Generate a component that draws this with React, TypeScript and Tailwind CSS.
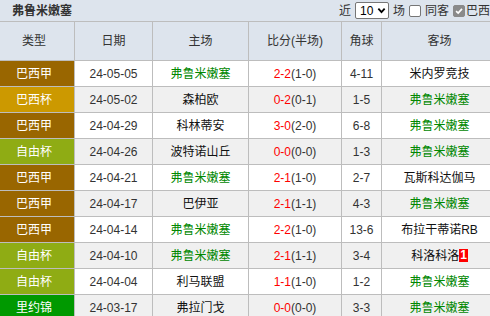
const rows = [
  { type: "巴西甲", date: "24-05-05", home: "弗鲁米嫩塞", score: "2-2", half: "(1-0)", corner: "4-11", away: "米内罗竞技" },
  { type: "巴西杯", date: "24-05-02", home: "森柏欧", score: "0-2", half: "(0-1)", corner: "1-5", away: "弗鲁米嫩塞" },
  { type: "巴西甲", date: "24-04-29", home: "科林蒂安", score: "3-0", half: "(2-0)", corner: "6-8", away: "弗鲁米嫩塞" },
  { type: "自由杯", date: "24-04-26", home: "波特诺山丘", score: "0-0", half: "(0-0)", corner: "1-3", away: "弗鲁米嫩塞" },
  { type: "巴西甲", date: "24-04-21", home: "弗鲁米嫩塞", score: "2-1", half: "(1-0)", corner: "2-7", away: "瓦斯科达伽马" },
  { type: "巴西甲", date: "24-04-17", home: "巴伊亚", score: "2-1", half: "(1-1)", corner: "4-3", away: "弗鲁米嫩塞" },
  { type: "巴西甲", date: "24-04-14", home: "弗鲁米嫩塞", score: "2-2", half: "(1-0)", corner: "13-6", away: "布拉干蒂诺RB" },
  { type: "自由杯", date: "24-04-10", home: "弗鲁米嫩塞", score: "2-1", half: "(1-1)", corner: "3-4", away: "科洛科洛", badge: "1" },
  { type: "自由杯", date: "24-04-04", home: "利马联盟", score: "1-1", half: "(1-0)", corner: "1-2", away: "弗鲁米嫩塞" },
  { type: "里约锦", date: "24-03-17", home: "弗拉门戈", score: "0-0", half: "(0-0)", corner: "3-3", away: "弗鲁米嫩塞" },
];

const typeBg: Record<string, string> = {
  巴西甲: "bg-[#996600]",
  巴西杯: "bg-[#cc9900]",
  自由杯: "bg-[#8fac14]",
  里约锦: "bg-[#009900]",
};

const TEAM = "弗鲁米嫩塞";
const cols = "grid grid-cols-[75px_78px_96px_93px_40px_116px]";
const cell = "flex items-center justify-center border-r border-b border-[#bdbdbd]";

function Team({ name, badge }: { name: string; badge?: string }) {
  return (
    <span className={name === TEAM ? "text-[#008800]" : "text-[#111]"}>
      {name}
      {badge && (
        <span className="inline-block bg-[#ff0000] text-white font-bold px-[1px] leading-[13px] align-[1px]">
          {badge}
        </span>
      )}
    </span>
  );
}

function Box({ checked }: { checked?: boolean }) {
  return (
    <span
      className={
        "inline-flex items-center justify-center w-[12px] h-[12px] rounded-[2px] border " +
        (checked ? "bg-[#8a8a8a] border-[#8a8a8a]" : "bg-white border-[#767676]")
      }
    >
      {checked && (
        <svg viewBox="0 0 12 12" className="w-[10px] h-[10px]">
          <path d="M2.5 6.2 L5 8.6 L9.6 3.4" stroke="white" strokeWidth="2" fill="none" />
        </svg>
      )}
    </span>
  );
}

export default function App() {
  return (
    <div className="w-[490px] h-[316px] overflow-hidden bg-white">
      <div
        className="w-[498px] text-[12px] text-[#333]"
        style={{ fontFamily: '"Liberation Sans", "Noto Sans CJK SC", sans-serif' }}
      >
        <div className="h-[22px] flex items-center bg-[#dde4ed] border-b border-[#bdbdbd] pl-[12px] pr-[8px]">
          <span className="font-bold text-[#333]">弗鲁米嫩塞</span>
          <div className="ml-auto flex items-center gap-[4px]">
            <span>近</span>
            <span className="inline-flex items-center justify-between w-[34px] h-[17px] bg-white border border-[#767676] rounded-[2px] pl-[4px] pr-[2px] text-[12px] text-black">
              10
              <svg viewBox="0 0 10 10" className="w-[9px] h-[9px]">
                <path d="M1.5 3 L5 6.8 L8.5 3" stroke="black" strokeWidth="2" fill="none" />
              </svg>
            </span>
            <span>场</span>
            <Box />
            <span>同客</span>
            <Box checked />
            <span className="-ml-[3px]">巴西</span>
          </div>
        </div>
        <div className={cols + " h-[39px] bg-[#dde4ed]"}>
          <div className={cell + " pr-[6px]"}>类型</div>
          <div className={cell}>日期</div>
          <div className={cell}>主场</div>
          <div className={cell}>比分(半场)</div>
          <div className={cell}>角球</div>
          <div className={cell}>客场</div>
        </div>
        {rows.map((r, i) => (
          <div key={i} className={cols + " h-[26px] " + (i % 2 ? "bg-[#f0f0f0]" : "bg-white")}>
            <div className={cell + " pr-[6px] text-white " + typeBg[r.type]}>{r.type}</div>
            <div className={cell}>{r.date}</div>
            <div className={cell}>
              <Team name={r.home} />
            </div>
            <div className={cell}>
              <span className="text-[#ff0000]">{r.score}</span>
              <span>{r.half}</span>
            </div>
            <div className={cell}>{r.corner}</div>
            <div className={cell}>
              <Team name={r.away} badge={r.badge} />
            </div>
          </div>
        ))}
      </div>
    </div>
  );
}
